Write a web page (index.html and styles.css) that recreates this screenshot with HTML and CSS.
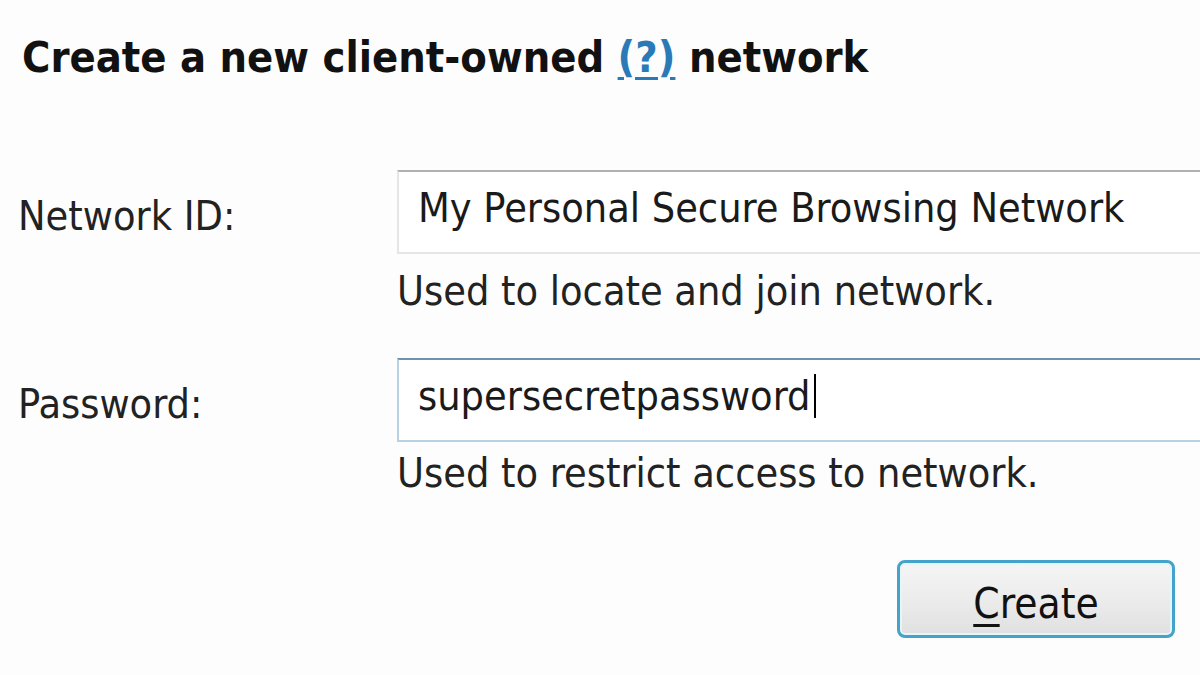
FILE: index.html
```html
<!DOCTYPE html>
<html>
<head>
<meta charset="utf-8">
<link rel="stylesheet" href="styles.css">
</head>
<body>
<div class="page">
  <h1 class="title">Create a new client-owned <a class="help" href="#">(?)</a> network</h1>
  <div class="form">
    <div class="row">
      <div class="label">Network ID:</div>
      <div class="field">
        <div class="input">My Personal Secure Browsing Network</div>
        <div class="hint hint1">Used to locate and join network.</div>
      </div>
    </div>
    <div class="row row2">
      <div class="label">Password:</div>
      <div class="field">
        <div class="input focus">supersecretpassword<span class="caret"></span></div>
        <div class="hint hint2">Used to restrict access to network.</div>
      </div>
    </div>
    <div class="actions">
      <button class="btn"><u>C</u>reate</button>
    </div>
  </div>
</div>
</body>
</html>
```
FILE: styles.css
```css
html, body { margin: 0; padding: 0; background: #fdfdfd; }
body { width: 1200px; height: 675px; overflow: hidden; font-family: "DejaVu Sans Condensed", "DejaVu Sans", sans-serif; color: #1c1c1c; }
.page { padding: 29px 0 0 22px; }
.title { margin: 0; font-size: 43px; font-weight: bold; line-height: 56px; color: #111; }
.help { color: #2a7ab8; text-decoration: underline; text-decoration-thickness: 3px; text-underline-offset: 5px; }
.form { margin-top: 85px; }
.row { display: flex; }
.row2 { margin-top: 43px; }
.label { flex: 0 0 379px; margin-left: -4px; font-size: 41px; line-height: 92px; color: #222; }
.field { flex: 0 0 820px; }
.input { height: 84px; box-sizing: border-box; width: 820px; border: 2px solid #e3e5e7; border-top-color: #b0b0b0; background: #fff; padding: 0 0 8px 19px; font-size: 41px; color: #1a1a1a; display: flex; align-items: center; }
.input.focus { border-color: #b8d2e3; border-top-color: #6f93ad; }
.caret { display: inline-block; width: 2px; height: 44px; background: #000; margin-left: 3px; }
.hint { font-size: 41px; line-height: 48px; color: #222; white-space: nowrap; }
.hint1 { margin-top: 13px; }
.hint2 { margin-top: 7px; }
.actions { display: flex; justify-content: flex-end; padding-right: 25px; margin-top: 63px; }
.btn { width: 278px; height: 78px; box-sizing: border-box; border: 3px solid #45a2c9; border-radius: 8px; background: linear-gradient(#f5f5f5 0%, #ececec 50%, #e0e0e0 100%); font-family: inherit; font-size: 42px; color: #111; padding: 9px 0 0 0; box-shadow: inset 0 0 0 2px #e6f4fb; }
.btn u { text-decoration-thickness: 3px; text-underline-offset: 6px; }
```
